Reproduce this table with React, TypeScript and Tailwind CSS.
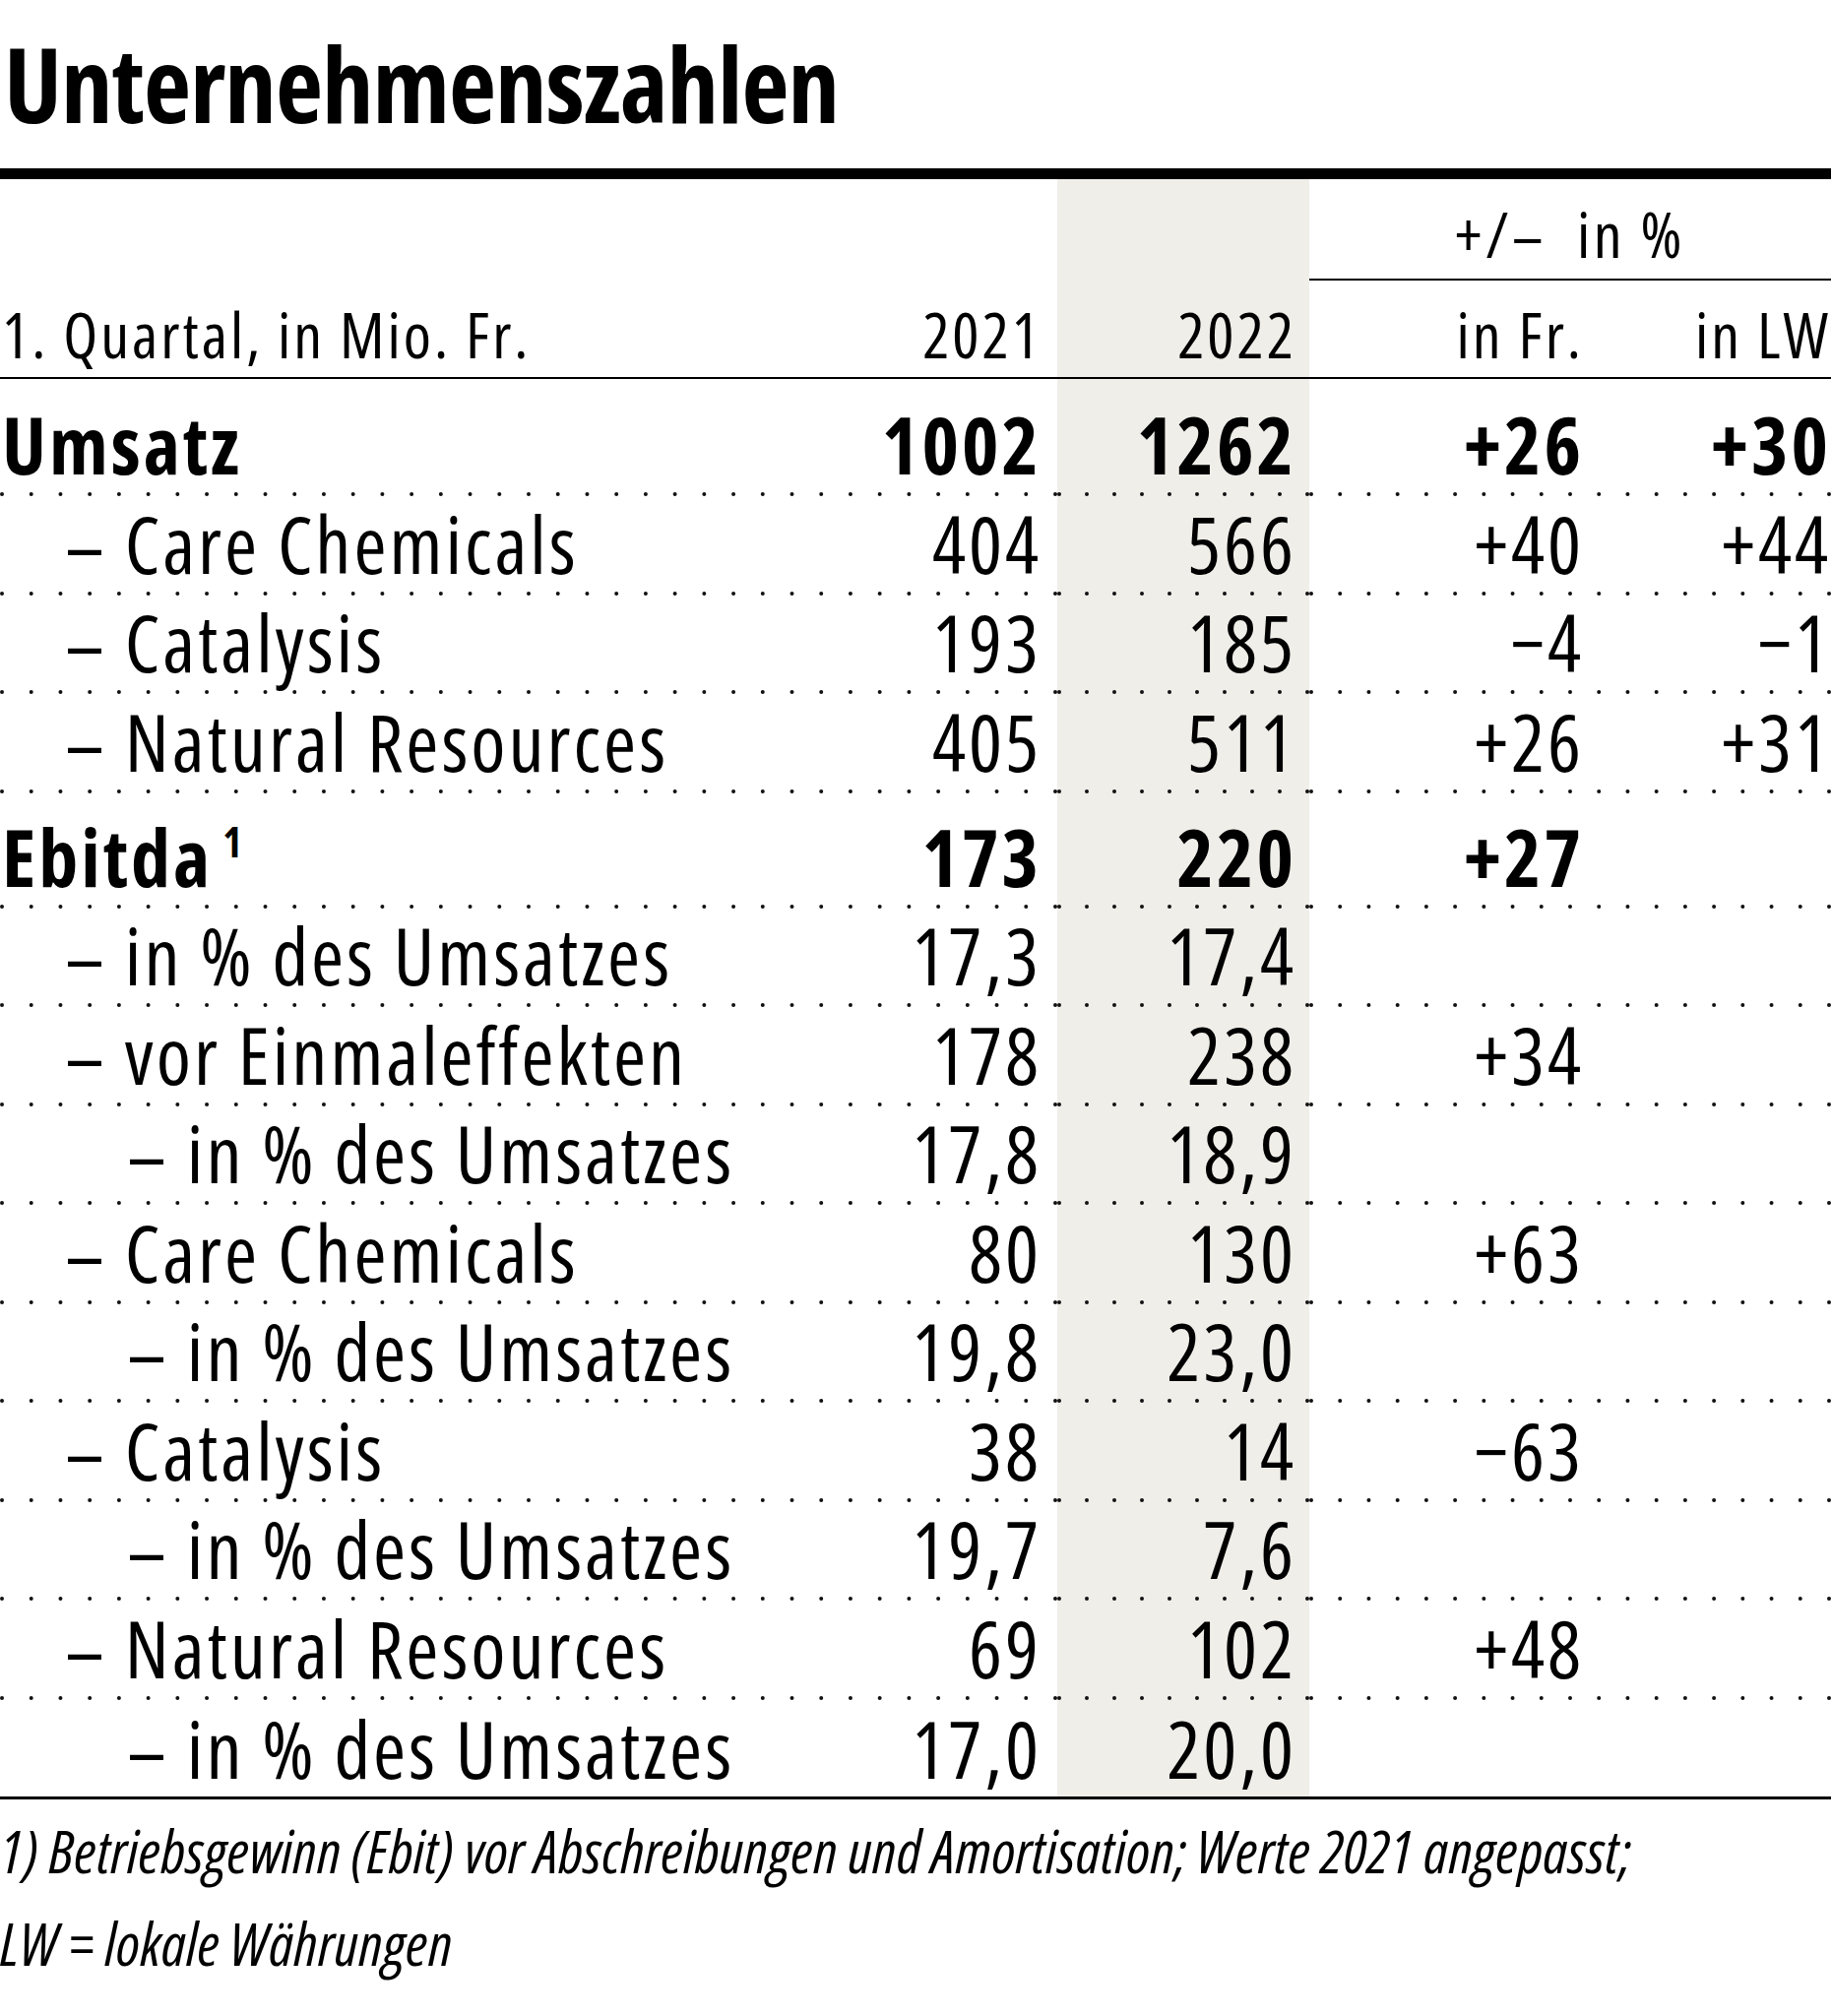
import clsx from "clsx";

const SHADE = "bg-[#efeee9]";
const BODY = "font-['Open_Sans',sans-serif] [font-stretch:75%]";

type Row = {
  label: string;
  level: 0 | 1 | 2;
  bold?: boolean;
  sup?: string;
  v21: string;
  v22: string;
  fr?: string;
  lw?: string;
  h: string;
};

const ROWS: Row[] = [
  { label: "Umsatz", level: 0, bold: true, v21: "1002", v22: "1262", fr: "+26", lw: "+30", h: "h-[115px]" },
  { label: "Care Chemicals", level: 1, v21: "404", v22: "566", fr: "+40", lw: "+44", h: "h-[96.5px]" },
  { label: "Catalysis", level: 1, v21: "193", v22: "185", fr: "−4", lw: "−1", h: "h-[96.5px]" },
  { label: "Natural Resources", level: 1, v21: "405", v22: "511", fr: "+26", lw: "+31", h: "h-[96.5px]" },
  { label: "Ebitda", level: 0, bold: true, sup: "1", v21: "173", v22: "220", fr: "+27", h: "h-[113px]" },
  { label: "in % des Umsatzes", level: 1, v21: "17,3", v22: "17,4", h: "h-[96.5px]" },
  { label: "vor Einmaleffekten", level: 1, v21: "178", v22: "238", fr: "+34", h: "h-[96.5px]" },
  { label: "in % des Umsatzes", level: 2, v21: "17,8", v22: "18,9", h: "h-[96.5px]" },
  { label: "Care Chemicals", level: 1, v21: "80", v22: "130", fr: "+63", h: "h-[96.5px]" },
  { label: "in % des Umsatzes", level: 2, v21: "19,8", v22: "23,0", h: "h-[96.5px]" },
  { label: "Catalysis", level: 1, v21: "38", v22: "14", fr: "−63", h: "h-[96.5px]" },
  { label: "in % des Umsatzes", level: 2, v21: "19,7", v22: "7,6", h: "h-[96.5px]" },
  { label: "Natural Resources", level: 1, v21: "69", v22: "102", fr: "+48", h: "h-[96.5px]" },
  { label: "in % des Umsatzes", level: 2, v21: "17,0", v22: "20,0", h: "h-[98.5px]" },
];

const COLS = "grid grid-cols-[818px_256px_256px_290px_240px]";

function Dots({ width, shade }: { width: number; shade?: boolean }) {
  const n = Math.round((width - 4) / 29.5);
  const step = (width - 4) / n;
  return (
    <svg width={width} height={4} className={clsx("block", shade && SHADE)}>
      <line
        x1={2}
        y1={2}
        x2={width - 1.99}
        y2={2}
        stroke="#111"
        strokeWidth={4}
        strokeLinecap="round"
        strokeDasharray={`0 ${step}`}
      />
    </svg>
  );
}

function DotLine() {
  return (
    <div className="flex">
      <Dots width={1074} />
      <Dots width={256} shade />
      <Dots width={530} />
    </div>
  );
}

function TableRow({ row }: { row: Row }) {
  const cell = clsx(
    "flex items-end pb-[9px] leading-none text-[80px] tracking-[3px]",
    row.bold ? "font-bold" : "font-normal",
    row.h
  );
  return (
    <div className={COLS}>
      <div
        className={clsx(
          cell,
          "whitespace-pre",
          row.level === 0 && "pl-[2px]",
          row.level === 1 && "pl-[66px]",
          row.level === 2 && "pl-[129px]"
        )}
      >
        <span>
          {row.level > 0 ? "– " : ""}
          {row.label}
          {row.sup && <span className="ml-[10px] align-[30px] text-[42px] font-bold tracking-normal">{row.sup}</span>}
        </span>
      </div>
      <div className={clsx(cell, "justify-end pr-[16px]")}>{row.v21}</div>
      <div className={clsx(cell, SHADE, "justify-end pr-[13px]")}>{row.v22}</div>
      <div className={clsx(cell, "justify-end pr-[11px]")}>{row.fr}</div>
      <div className={clsx(cell, "justify-end pr-[0px]")}>{row.lw}</div>
    </div>
  );
}

export default function App() {
  return (
    <div className={clsx("w-[1860px] min-h-[2048px] bg-white text-black overflow-hidden", BODY)}>
      <div className="h-[171px] pt-[32px]">
        <h1 className="text-[105px] font-bold leading-none tracking-[-1px] pl-[4px]">Unternehmenszahlen</h1>
      </div>
      <div className="h-[11px] bg-black" />

      <div className={clsx(COLS, "h-[102.5px]")}>
        <div />
        <div />
        <div className={SHADE} />
        <div className="col-span-2 flex items-end justify-center border-b-[2.5px] border-black pb-[13px] text-[64px] leading-none tracking-[3.5px] whitespace-pre">
          +/–  in %
        </div>
      </div>

      <div
        className={clsx(
          COLS,
          "h-[100.5px] border-b-[2.5px] border-black text-[64px] leading-none tracking-[3px]"
        )}
      >
        <div className="flex items-end pb-[11.5px] pl-[2px]">1. Quartal, in Mio. Fr.</div>
        <div className="flex items-end justify-end pb-[11.5px] pr-[16px]">2021</div>
        <div className={clsx("flex items-end justify-end pb-[11.5px] pr-[13px]", SHADE)}>2022</div>
        <div className="flex items-end justify-end pb-[11.5px] pr-[11px]">in Fr.</div>
        <div className="flex items-end justify-end pb-[11.5px] pr-[0px]">in LW</div>
      </div>

      {ROWS.map((row, i) => (
        <div key={i}>
          <TableRow row={row} />
          {i < ROWS.length - 1 && <DotLine />}
        </div>
      ))}

      <div className="h-[2.5px] bg-black" />

      <div className="pt-[5.5px] text-[60px] italic leading-[94px] tracking-[0.3px] whitespace-nowrap">
        1) Betriebsgewinn (Ebit) vor Abschreibungen und Amortisation; Werte 2021 angepasst;
        <br />
        LW = lokale Währungen
      </div>
    </div>
  );
}
